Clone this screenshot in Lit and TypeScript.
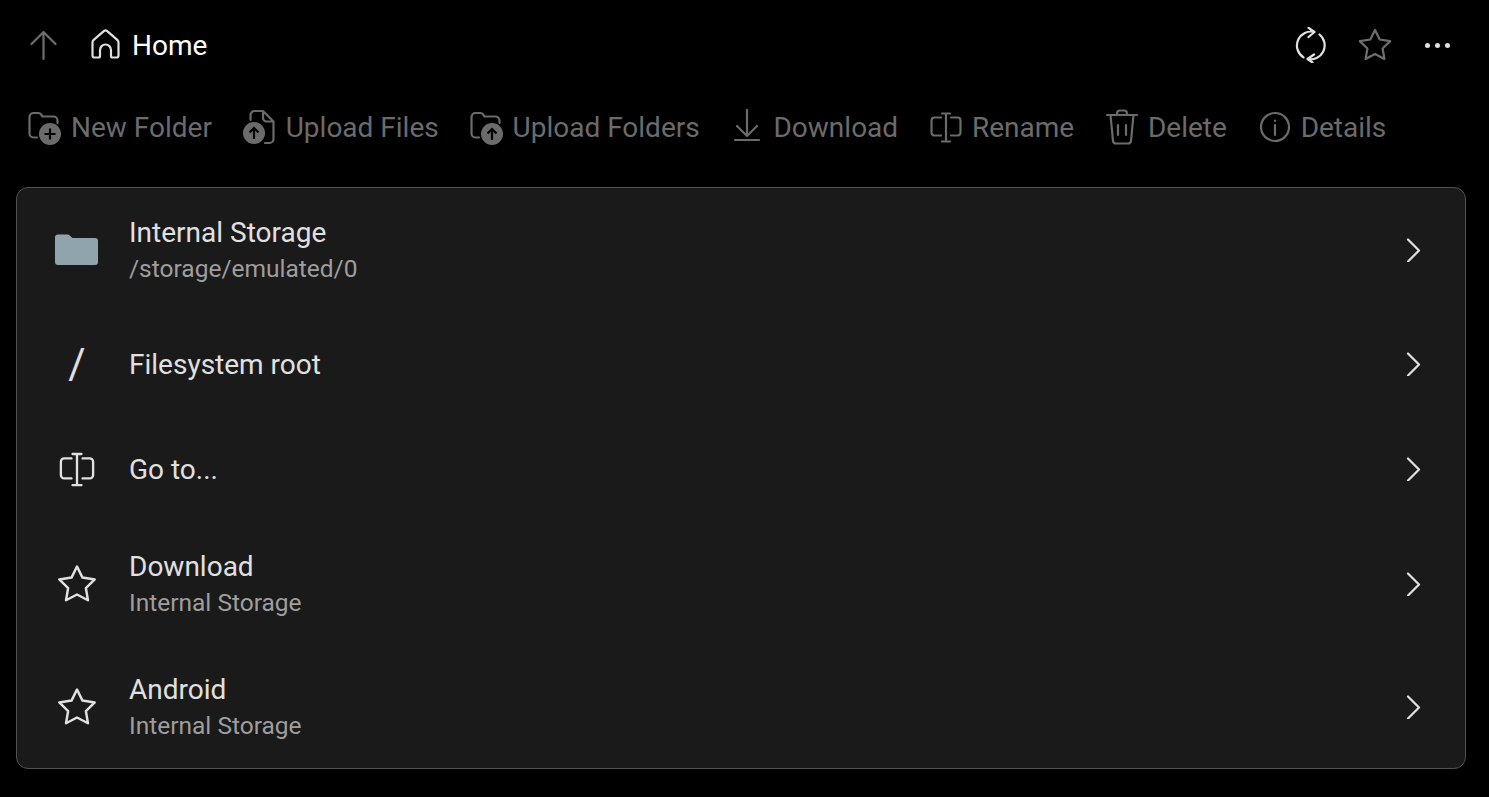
import { LitElement, html, css, svg } from 'lit';
import { customElement } from 'lit/decorators.js';

const STAR = '18,3 22.7,12.5 33.2,14.1 25.6,21.5 27.4,31.9 18,27 8.6,31.9 10.4,21.5 2.8,14.1 13.3,12.5';

const icons = {
  up: svg`<path d="M17.500 32V5M5.500 17 17.500 5l12 12"/>`,
  home: svg`<path d="M4.500 28.500V15.500a3.500 3.500 0 0 1 1.200-2.600L15.800 4.200a2.600 2.600 0 0 1 3.400 0L29.300 12.900a3.500 3.500 0 0 1 1.200 2.600V28.500a2 2 0 0 1-2 2H24.500a1.500 1.500 0 0 1-1.500-1.500V23a5.500 5.500 0 0 0-11 0V29a1.500 1.500 0 0 1-1.500 1.500H6.500a2 2 0 0 1-2-2z"/>`,
  sync: svg`<path d="M10.500 30.400A14 14 0 0 1 21.500 5M15.500 .8 21.500 5 15.500 10M26.500 7.500A14 14 0 0 1 14.500 32M21 27.500 14.500 32 19.500 35.500"/>`,
  star: svg`<polygon points=${STAR}/>`,
  newFolder: svg`<path d="M10 28.500H6.500a4 4 0 0 1-4-4V8a4 4 0 0 1 4-4h5a3 3 0 0 1 2.400 1.200L15.500 7.500h11a4 4 0 0 1 4 4V14"/><circle class="solid" cx="23" cy="25" r="11"/><path class="cut" d="M23 19.500v11M17.500 25h11"/>`,
  uploadFile: svg`<path d="M10.500 11V6a4 4 0 0 1 4-4h8.500l10.500 10.500V30a4 4 0 0 1-4 4H25M23 2v7a3.500 3.500 0 0 0 3.500 3.500h7"/><circle class="solid" cx="14" cy="24" r="11"/><path class="cut" d="M14 30v-11M9.500 23.500 14 19l4.500 4.500"/>`,
  uploadFolder: svg`<path d="M10 28.500H6.500a4 4 0 0 1-4-4V8a4 4 0 0 1 4-4h5a3 3 0 0 1 2.400 1.200L15.500 7.500h11a4 4 0 0 1 4 4V14"/><circle class="solid" cx="23" cy="25" r="11"/><path class="cut" d="M23 31v-11M18.500 24.500 23 20l4.500 4.500"/>`,
  download: svg`<path d="M18 1v26M8 17l10 10 10-10M6 31h24"/>`,
  rename: svg`<path d="M13 8.500H6.500a3 3 0 0 0-3 3v12a3 3 0 0 0 3 3H13M23 8.500h6.500a3 3 0 0 1 3 3v12a3 3 0 0 1-3 3H23M18 4.500v28M14 4.500h8M14 32.500h8"/>`,
  trash: svg`<path d="M3 6h30M6.500 6l2.500 26a3 3 0 0 0 3 2.500h12a3 3 0 0 0 3-2.500L29.500 6M13 6V4.500a3 3 0 0 1 3-3h4a3 3 0 0 1 3 3V6M14 16v10M22 16v10"/>`,
  info: svg`<circle cx="18" cy="18" r="14"/><path d="M18 16v10M18 11.500v.5"/>`,
  folder: svg`<path class="fill" d="M0 6.500A3 3 0 0 1 3 3.500h9.500a3 3 0 0 1 2 .8L17.500 7H40a3 3 0 0 1 3 3v21a3 3 0 0 1-3 3H3a3 3 0 0 1-3-3z"/>`,
  chevron: svg`<path d="M7 1.500 18 12.500 7 23.500"/>`,
};

const ICON = (name: keyof typeof icons, size = 36, box = '0 0 36 36') =>
  html`<svg width=${size} height=${size} viewBox=${box}>${icons[name]}</svg>`;

const actions: { icon: keyof typeof icons; label: string; box?: string }[] = [
  { icon: 'newFolder', label: 'New Folder' },
  { icon: 'uploadFile', label: 'Upload Files', box: '2 0 36 36' },
  { icon: 'uploadFolder', label: 'Upload Folders' },
  { icon: 'download', label: 'Download' },
  { icon: 'rename', label: 'Rename' },
  { icon: 'trash', label: 'Delete' },
  { icon: 'info', label: 'Details' },
];

@customElement('app-root')
export class AppRoot extends LitElement {
  static styles = css`
    :host {
      display: block;
      height: 797px;
      background: #000;
      font-family: 'Roboto', sans-serif;
      overflow: hidden;
    }
    svg {
      display: block;
      flex: none;
      fill: none;
      stroke: currentColor;
      stroke-width: 2.2;
      stroke-linecap: round;
      stroke-linejoin: round;
    }
    svg .solid { fill: currentColor; stroke: none; }
    svg .cut { stroke: #000; stroke-width: 2.2; stroke-linecap: butt; stroke-linejoin: miter; }
    svg .fill { fill: #90a4ae; stroke: none; }

    .top {
      display: flex;
      align-items: center;
      height: 90px;
      padding: 0 34px 0 26px;
      color: #e0e0e0;
    }
    .back { color: #6e6e6e; margin-right: 26px; }
    .home-label { font-size: 28px; color: #fff; margin-left: 8px; }
    .spacer { flex: 1; }
    .top-actions { display: flex; align-items: center; gap: 28px; }
    .top-actions .off { color: #6e6e6e; }
    .dots { display: flex; gap: 5px; padding: 0 5px 0 4px; }
    .dots i { width: 5px; height: 5px; border-radius: 50%; background: #e0e0e0; }

    .actions {
      display: flex;
      align-items: center;
      gap: 29.800px;
      height: 74px;
      padding-left: 27px;
      color: #6b6b6b;
    }
    .action { display: flex; align-items: center; gap: 8px; font-size: 28px; white-space: nowrap; }

    .card {
      margin: 23px 23px 0 16px;
      background: #1a1a1a;
      border: 1px solid #505050;
      border-radius: 12px;
    }
    .row {
      display: flex;
      align-items: center;
      height: 123px;
      padding: 0 40px 0 38px;
      color: #e0e0e0;
    }
    .row.single { height: 105.500px; }
    .lead { width: 44px; height: 44px; display: flex; align-items: center; justify-content: center; margin-right: 30px; flex: none; }
    .lead svg { stroke-width: 2.100; }
    .slash { font-size: 42px; line-height: 44px; }
    .text { flex: 1; min-width: 0; padding-top: 2px; }
    .title { font-size: 28px; line-height: 36px; color: #e0e0e0; }
    .sub { font-size: 24.500px; line-height: 36px; color: #9e9e9e; }
  `;

  private row(lead: unknown, title: string, sub?: string) {
    return html`
      <div class="row ${sub ? '' : 'single'}">
        <div class="lead">${lead}</div>
        <div class="text">
          <div class="title">${title}</div>
          ${sub ? html`<div class="sub">${sub}</div>` : ''}
        </div>
        ${ICON('chevron', 24, '0 0 24 24')}
      </div>
    `;
  }

  render() {
    return html`
      <div class="top">
        <div class="back">${ICON('up')}</div>
        ${ICON('home')}
        <span class="home-label">Home</span>
        <div class="spacer"></div>
        <div class="top-actions">
          ${ICON('sync')}
          <div class="off">${ICON('star')}</div>
          <div class="dots"><i></i><i></i><i></i></div>
        </div>
      </div>
      <div class="actions">
        ${actions.map(a => html`<div class="action">${ICON(a.icon, 36, a.box)}<span>${a.label}</span></div>`)}
      </div>
      <div class="card">
        ${this.row(ICON('folder', 44, '0 0 44 38'), 'Internal Storage', '/storage/emulated/0')}
        ${this.row(html`<span class="slash">/</span>`, 'Filesystem root')}
        ${this.row(ICON('rename', 40), 'Go to...')}
        ${this.row(ICON('star', 42), 'Download', 'Internal Storage')}
        ${this.row(ICON('star', 42), 'Android', 'Internal Storage')}
      </div>
    `;
  }
}

declare global {
  interface HTMLElementTagNameMap {
    'app-root': AppRoot;
  }
}
